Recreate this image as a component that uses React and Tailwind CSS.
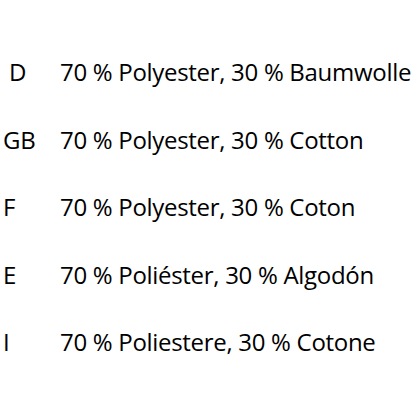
export default function App() {
  const rows = [
    ["D", "70 % Polyester, 30 % Baumwolle", "pl-[9px]"],
    ["GB", "70 % Polyester, 30 % Cotton", "pl-[3px]"],
    ["F", "70 % Polyester, 30 % Coton", "pl-[3px]"],
    ["E", "70 % Poliéster, 30 % Algodón", "pl-[3px]"],
    ["I", "70 % Poliestere, 30 % Cotone", "pl-[3px]"],
  ];
  return (
    <div className="w-[415px] h-[415px] overflow-hidden bg-white text-black font-['Open_Sans',sans-serif] text-[24px] tracking-[-0.3px] flex flex-col pt-[56px] gap-[35.6px]">
      {rows.map(([k, v, p]) => (
        <div key={k} className="flex items-center h-[32px] leading-[32px]">
          <span className={`w-[60px] shrink-0 ${p}`}>{k}</span>
          <span className="whitespace-nowrap">{v}</span>
        </div>
      ))}
    </div>
  );
}
